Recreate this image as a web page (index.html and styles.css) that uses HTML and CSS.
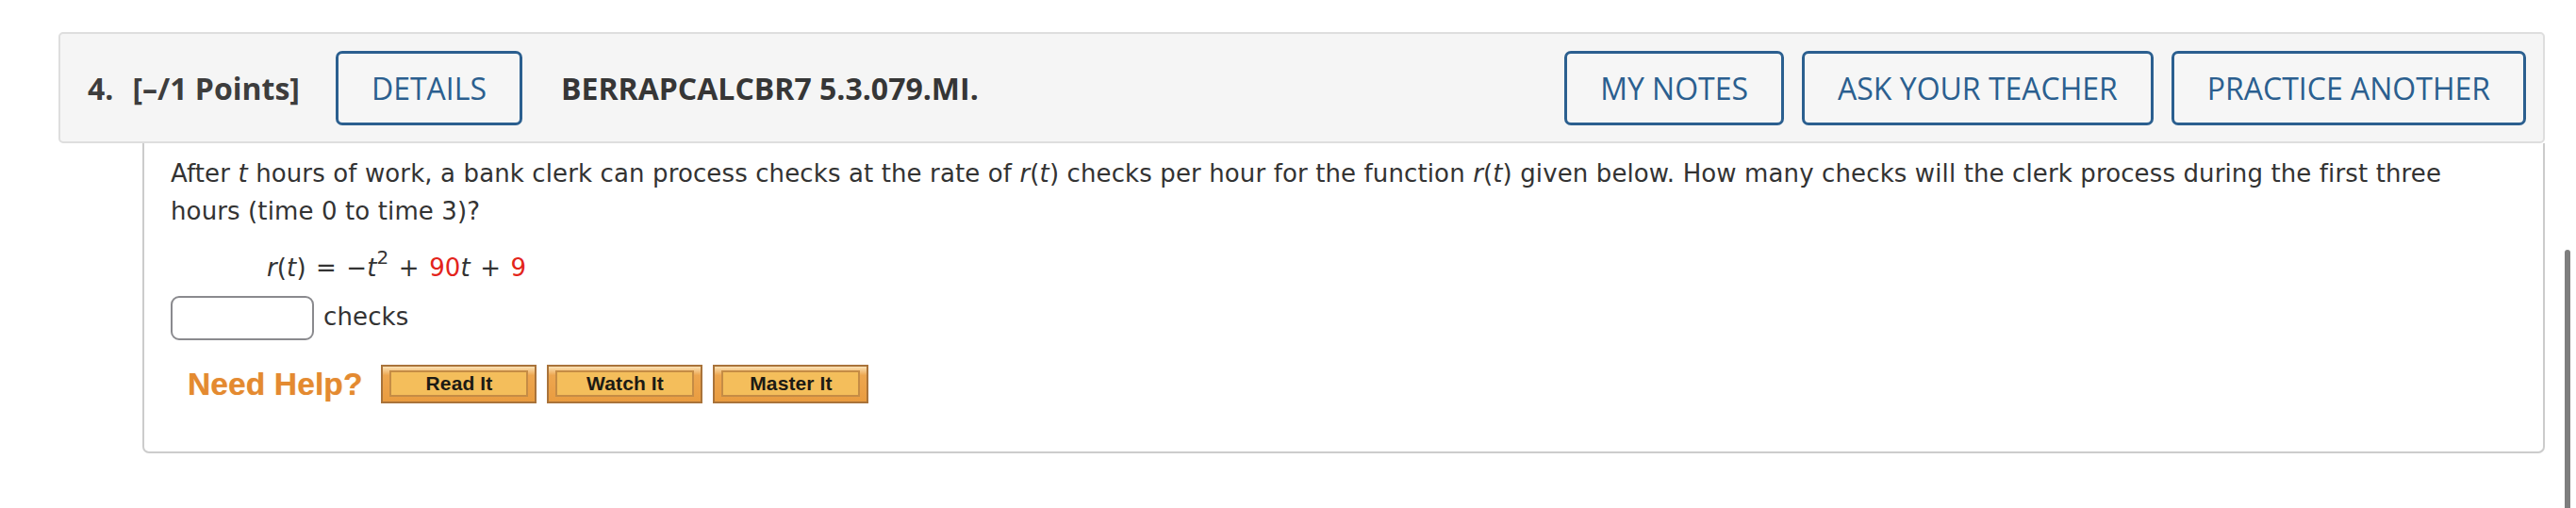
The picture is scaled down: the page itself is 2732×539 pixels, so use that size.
FILE: index.html
```html
<!DOCTYPE html>
<html>
<head>
<meta charset="utf-8">
<link rel="stylesheet" href="styles.css">
</head>
<body>
<div class="page">
  <div class="qhead">
    <span class="qnum">4.</span>
    <span class="qpts">[&ndash;/1 Points]</span>
    <span class="btn details">DETAILS</span>
    <span class="qid">BERRAPCALCBR7 5.3.079.MI.</span>
    <div class="actions">
      <span class="btn">MY NOTES</span>
      <span class="btn">ASK YOUR TEACHER</span>
      <span class="btn">PRACTICE ANOTHER</span>
    </div>
  </div>
  <div class="qbody">
    <p class="text">After <i>t</i> hours of work, a bank clerk can process checks at the rate of <i>r</i>(<i>t</i>) checks per hour for the function <i>r</i>(<i>t</i>) given below. How many checks will the clerk process during the first three hours (time 0 to time 3)?</p>
    <div class="eq"><i>r</i>(<i>t</i>) = &minus;<i>t</i><sup>2</sup> + <span class="red">90</span><i>t</i> + <span class="red">9</span></div>
    <div class="answer">
      <span class="inbox"></span>
      <span class="unit">checks</span>
    </div>
    <div class="help">
      <span class="needhelp">Need Help?</span>
      <span class="hbtn"><span class="hin">Read It</span></span>
      <span class="hbtn"><span class="hin">Watch It</span></span>
      <span class="hbtn"><span class="hin">Master It</span></span>
    </div>
  </div>
</div>
<div class="scrollthumb"></div>
</body>
</html>
```

FILE: styles.css
```css
html, body {
  margin: 0;
  padding: 0;
  background: #ffffff;
}
.page {
  padding: 34px 33px 0 62px;
}
.qhead {
  display: flex;
  align-items: center;
  height: 114px;
  background: #f5f5f5;
  border: 2px solid #dedede;
  border-radius: 5px;
  padding: 0 18px 0 29px;
  font-family: "Open Sans", "Liberation Sans", sans-serif;
}
.qnum {
  font-weight: 700;
  font-size: 32px;
  color: #3d3d3d;
  margin-right: 20px;
}
.qpts {
  font-weight: 700;
  font-size: 32px;
  color: #3d3d3d;
  margin-right: 38px;
}
.btn {
  display: inline-flex;
  align-items: center;
  justify-content: center;
  box-sizing: border-box;
  height: 79px;
  padding: 0 35px;
  border: 3px solid #2b5f8f;
  border-radius: 7px;
  color: #2b5f8f;
  font-size: 32px;
  font-weight: 500;
  background: #f6f6f6;
}
.qid {
  margin-left: 41px;
  font-weight: 700;
  font-size: 32px;
  color: #363636;
}
.actions {
  margin-left: auto;
  display: flex;
  gap: 19px;
}
.qbody {
  margin-left: 89px;
  border: 2px solid #cccccc;
  border-top: none;
  border-radius: 0 0 7px 7px;
  padding: 12px 100px 51px 28px;
  font-family: "DejaVu Sans", Verdana, sans-serif;
  font-size: 26px;
  letter-spacing: 0.12px;
  color: #333333;
}
.text {
  margin: 0 0 20px 0;
  line-height: 40px;
}
.eq {
  line-height: 40px;
  padding-left: 102px;
  word-spacing: 2px;
}
.eq sup {
  font-size: 20px;
  line-height: 0;
  vertical-align: 13px;
}
.red {
  color: #e3241b;
}
.answer {
  display: flex;
  align-items: center;
  gap: 10px;
  margin-top: 10px;
}
.inbox {
  display: block;
  box-sizing: border-box;
  width: 152px;
  height: 47px;
  border: 2px solid #8a8a8e;
  border-radius: 9px;
  background: #fff;
}
.unit {
  line-height: 40px;
  margin-bottom: 4px;
}
.help {
  display: flex;
  align-items: center;
  margin-top: 26px;
  padding-left: 18px;
}
.needhelp {
  font-family: "Liberation Sans", Arial, sans-serif;
  font-weight: 700;
  font-size: 33.5px;
  color: #e48a30;
  margin-right: 20px;
  text-shadow: 0 0 1px rgba(228, 138, 48, 0.6);
}
.hbtn {
  display: block;
  box-sizing: border-box;
  width: 165px;
  height: 41px;
  margin-right: 11px;
  border: 2px solid #a9733a;
  background: linear-gradient(#fbe1b4 0%, #eda64f 25%, #e99c40 100%);
  padding: 4px 7px 5px 7px;
}
.hin {
  display: flex;
  align-items: center;
  justify-content: center;
  box-sizing: border-box;
  height: 100%;
  border: 2px solid #c58c45;
  background: #f4be5b;
  font-family: "Liberation Sans", Arial, sans-serif;
  font-weight: 700;
  font-size: 21px;
  color: #1c1a14;
}
.scrollthumb {
  position: fixed;
  right: 6px;
  top: 265px;
  bottom: -10px;
  width: 6px;
  border-radius: 3px;
  background: #7e7e7e;
}
```
